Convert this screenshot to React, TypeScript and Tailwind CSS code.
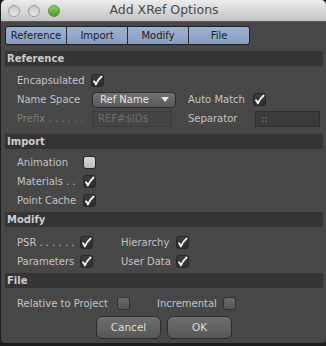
import React from "react";

const font = { fontFamily: '"DejaVu Sans", "Liberation Sans", sans-serif' };

function Check({ on = true, light = false }: { on?: boolean; light?: boolean }) {
  if (!on) {
    return (
      <div
        className={
          light
            ? "w-[13px] h-[13px] rounded-[3px] border border-[#2a2a2a] bg-gradient-to-b from-[#d6d6d6] to-[#bdbdbd]"
            : "w-[13px] h-[13px] rounded-[3px] border border-[#2f2f2f] bg-gradient-to-b from-[#6a6a6a] to-[#565656]"
        }
      />
    );
  }
  return (
    <div className="w-[13px] h-[13px] rounded-[3px] border border-[#262626] bg-gradient-to-b from-[#3c3c3c] to-[#2c2c2c] flex items-center justify-center">
      <svg width="11" height="11" viewBox="0 0 11 11">
        <path d="M2 6.3 Q3.2 7.4 3.9 9.4 Q6 4.6 9.6 1.6" fill="none" stroke="#f2f2f2" strokeWidth="1.9" strokeLinecap="round" strokeLinejoin="round" />
      </svg>
    </div>
  );
}

function Header({ title }: { title: string }) {
  return (
    <div className="ml-[4px] mr-[3px] h-[15px] bg-[#343434] flex items-center pl-[2px] text-[10px] font-bold text-[#cdcdcd]">
      {title}
    </div>
  );
}

export default function App() {
  return (
    <div className="w-[326px] h-[346px] bg-[#1c1c1c] overflow-hidden" style={font}>
      <div className="ml-[1px] w-[325px] h-[343px] rounded-t-[5px] rounded-b-[4px] overflow-hidden bg-[#474747] flex flex-col">
        {/* title bar */}
        <div className="h-[22px] bg-gradient-to-b from-[#ececec] to-[#c4c4c4] border-b border-[#5a5a5a] relative flex items-center justify-center">
          <div className="absolute left-[7px] top-[5px] flex gap-[8px]">
            <div className="w-[12px] h-[12px] rounded-full border border-[#9a9a9a] bg-gradient-to-b from-[#c8c8c8] to-[#e8e8e8]" />
            <div className="w-[12px] h-[12px] rounded-full border border-[#9a9a9a] bg-gradient-to-b from-[#c8c8c8] to-[#e8e8e8]" />
            <div className="w-[12px] h-[12px] rounded-full border border-[#5d8f3a] bg-gradient-to-b from-[#8fd15c] to-[#4f9a2a]" />
          </div>
          <span className="text-[12.5px] text-[#4a4a4a] pl-[1px]">Add XRef Options</span>
        </div>

        {/* tabs */}
        <div className="pt-[4px] pl-[4px]">
          <div className="flex w-[245px] h-[19px] rounded-[3px] border border-[#1e1e1e] bg-gradient-to-b from-[#9db2d2] to-[#889fc4] overflow-hidden text-[10px] text-[#1c1c1c]">
            <div className="w-[61px] flex items-center justify-center border-r border-[#2a2a2a]">Reference</div>
            <div className="w-[61px] flex items-center justify-center border-r border-[#2a2a2a]">Import</div>
            <div className="w-[61px] flex items-center justify-center border-r border-[#2a2a2a]">Modify</div>
            <div className="flex-1 flex items-center justify-center">File</div>
          </div>
        </div>

        <div className="h-[6px]" />
        <Header title="Reference" />
        <div className="pt-[5px] pb-[6px] text-[10px] text-[#c4c4c4]">
          <div className="h-[19px] flex items-center pl-[16px]">
            <span className="w-[74px]">Encapsulated</span>
            <Check />
          </div>
          <div className="h-[19px] flex items-center pl-[16px]">
            <span className="w-[75px]">Name Space</span>
            <div className="w-[84px] h-[16px] rounded-[4px] border border-[#2a2a2a] bg-gradient-to-b from-[#727272] to-[#585858] flex items-center justify-between pl-[7px] pr-[6px] text-[#e6e6e6]">
              <span>Ref Name</span>
              <svg width="8" height="5" viewBox="0 0 8 5"><path d="M0 0 L8 0 L4 5 Z" fill="#e8e8e8" /></svg>
            </div>
            <span className="ml-[12px] w-[65px]">Auto Match</span>
            <Check />
          </div>
          <div className="h-[19px] flex items-center pl-[16px]">
            <span className="w-[75px] text-[#7c7c7c]">Prefix . . . . . .</span>
            <div className="w-[80px] h-[16px] border border-[#3b3b3b] bg-[#444444] flex items-center pl-[5px] text-[#6c6c6c]">REF#$ID$</div>
            <span className="ml-[16px] w-[67px]">Separator</span>
            <div className="w-[65px] h-[16px] border border-[#2e2e2e] bg-[#3a3a3a] flex items-center pl-[5px] text-[#8a8a8a]">::</div>
          </div>
        </div>

        <Header title="Import" />
        <div className="pt-[4px] pb-[2px] text-[10px] text-[#c4c4c4]">
          <div className="h-[19px] flex items-center pl-[16px]">
            <span className="w-[66px]">Animation</span>
            <Check on={false} light />
          </div>
          <div className="h-[19px] flex items-center pl-[16px]">
            <span className="w-[66px]">Materials . .</span>
            <Check />
          </div>
          <div className="h-[19px] flex items-center pl-[16px]">
            <span className="w-[66px]">Point Cache</span>
            <Check />
          </div>
        </div>

        <Header title="Modify" />
        <div className="pt-[6px] pb-[2px] text-[10px] text-[#c4c4c4]">
          <div className="h-[19px] flex items-center pl-[16px]">
            <span className="w-[63px]">PSR . . . . . .</span>
            <Check />
            <span className="ml-[28px] w-[55px]">Hierarchy</span>
            <Check />
          </div>
          <div className="h-[19px] flex items-center pl-[16px]">
            <span className="w-[63px]">Parameters</span>
            <Check />
            <span className="ml-[28px] w-[55px]">User Data</span>
            <Check />
          </div>
        </div>

        <Header title="File" />
        <div className="pt-[6px] text-[10px] text-[#c4c4c4]">
          <div className="h-[19px] flex items-center pl-[16px]">
            <span className="w-[100px]">Relative to Project</span>
            <Check on={false} />
            <span className="ml-[27px] w-[66px]">Incremental</span>
            <Check on={false} />
          </div>
        </div>

        <div className="mt-[3px] pl-[95px] flex gap-[6px] text-[10.5px] text-[#dedede]">
          <div className="w-[65px] h-[23px] rounded-[6px] border border-[#2c2c2c] bg-gradient-to-b from-[#6e6e6e] to-[#575757] flex items-center justify-center">Cancel</div>
          <div className="w-[65px] h-[23px] rounded-[6px] border border-[#2c2c2c] bg-gradient-to-b from-[#6e6e6e] to-[#575757] flex items-center justify-center">OK</div>
        </div>
      </div>
    </div>
  );
}
